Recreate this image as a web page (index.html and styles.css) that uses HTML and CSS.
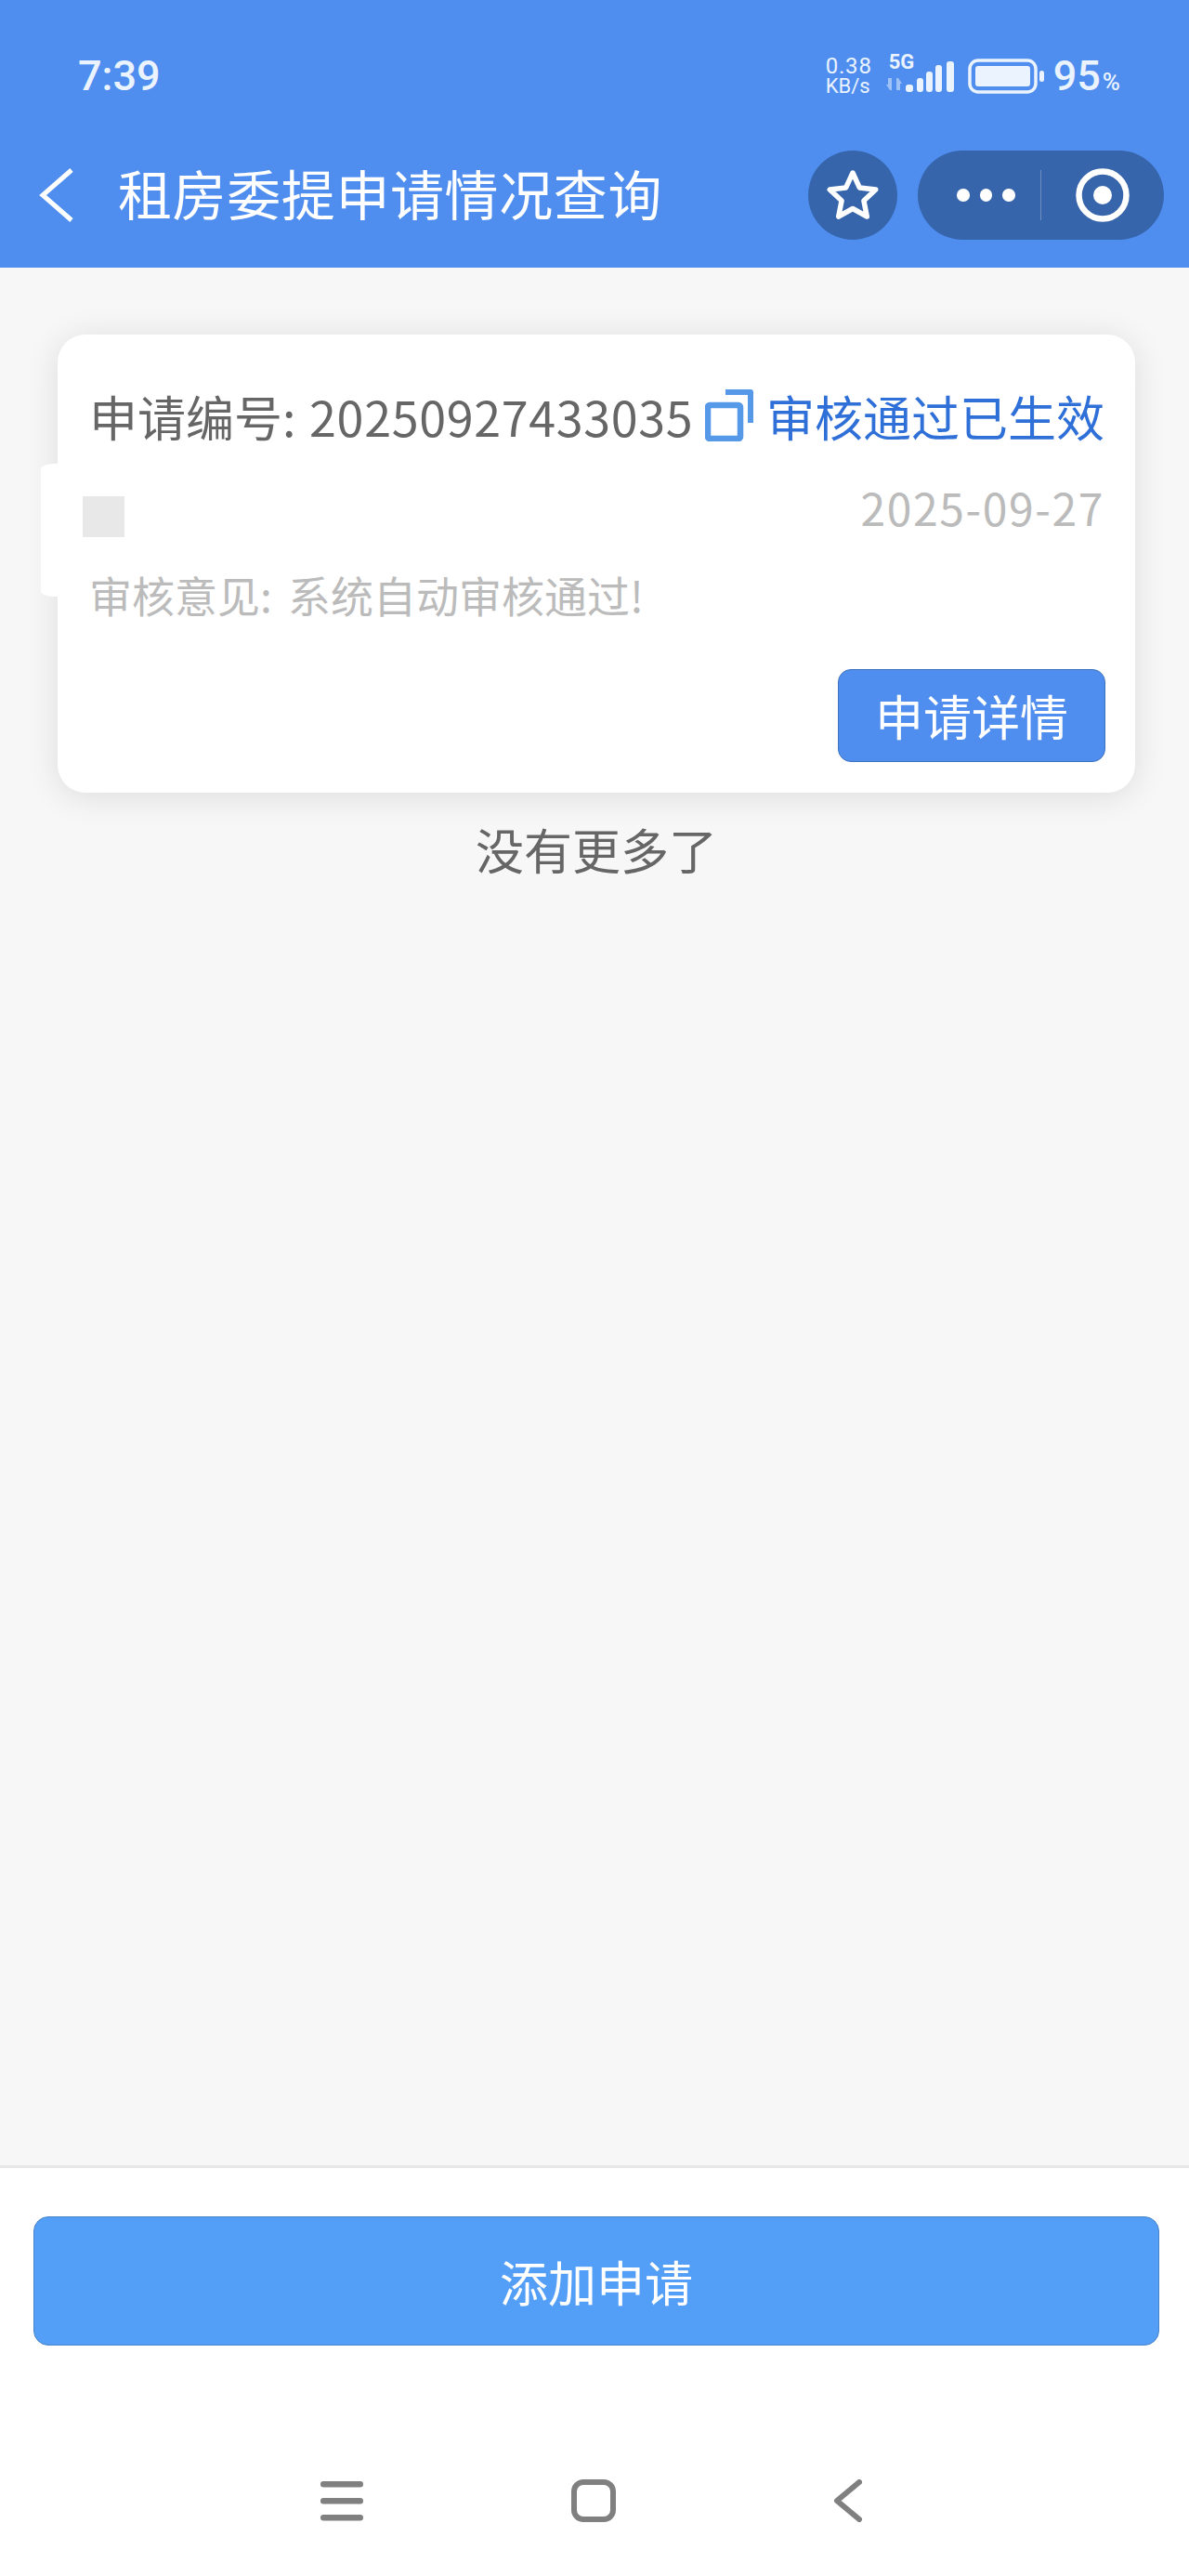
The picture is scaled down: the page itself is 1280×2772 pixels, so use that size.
FILE: index.html
```html
<!DOCTYPE html>
<html lang="zh-CN">
<head>
<meta charset="utf-8">
<title>租房委提申请情况查询</title>
<link rel="stylesheet" href="styles.css">
</head>
<body>
<div class="app">
  <header class="top">
    <div class="status">
      <span class="time">7:39</span>
      <div class="status-right">
        <div class="speed"><span class="speed-val">0.38</span><span class="speed-unit">KB/s</span></div>
        <div class="net">
          <span class="net-5g">5G</span>
          <svg width="76" height="40" viewBox="0 0 76 40">
            <g fill="#ffffff" fill-opacity=".45"><path d="M4 22h4v13H6l-4-6h2z"/><path d="M10 35h4V22h2l4 6h-2v7h-4z" transform="translate(-1 0)"/></g>
            <g fill="#eaf3fe"><rect x="23" y="29" width="8" height="8" rx="3"/><rect x="35" y="22" width="7" height="15" rx="3"/><rect x="45" y="15" width="7" height="22" rx="3"/><rect x="55" y="8" width="7" height="29" rx="3"/><rect x="67" y="4" width="8" height="33" rx="3"/></g>
          </svg>
        </div>
        <svg class="battery" width="84" height="38" viewBox="0 0 84 38">
          <rect x="2" y="2" width="71" height="34" rx="9" fill="none" stroke="#eaf3fe" stroke-width="3.5"/>
          <rect x="8" y="8" width="59" height="22" rx="3" fill="#eaf3fe"/>
          <rect x="77" y="13" width="5" height="12" rx="2.5" fill="#eaf3fe"/>
        </svg>
        <span class="pct">95<small class="pct-sign">%</small></span>
      </div>
    </div>
    <nav class="navbar">
      <svg class="back" width="40" height="60" viewBox="0 0 40 60"><path d="M36 3 5 30l31 27" fill="none" stroke="#fff" stroke-width="5"/></svg>
      <h1 class="title">租房委提申请情况查询</h1>
      <div class="star-btn">
        <svg width="58" height="60" viewBox="0 0 58 60"><path d="M29 6 36.3 21.9 53.7 24 40.9 35.9 44.3 53 29 44.5 13.7 53 17.1 35.9 4.3 24 21.7 21.9Z" fill="none" stroke="#fff" stroke-width="5.5" stroke-linejoin="round"/></svg>
      </div>
      <div class="capsule">
        <div class="dots"><i class="dot"></i><i class="dot"></i><i class="dot"></i></div>
        <i class="cap-div"></i>
        <svg width="60" height="60" viewBox="0 0 60 60"><circle cx="30" cy="30" r="25.5" fill="none" stroke="#fff" stroke-width="6.5"/><circle cx="30" cy="30" r="10" fill="#fff"/></svg>
      </div>
    </nav>
  </header>

  <main class="main">
    <article class="card">
      <div class="tab"><i class="tab-square"></i></div>
      <div class="row-head">
        <span class="apply-no">申请编号: <span class="apply-digits">20250927433035</span></span>
        <svg class="copy" width="52" height="56" viewBox="0 0 52 56">
          <rect x="3" y="17" width="35" height="36" rx="2" fill="none" stroke="#5599e8" stroke-width="6.5"/>
          <path d="M22 3H49V36" fill="none" stroke="#5599e8" stroke-width="6" stroke-linejoin="round"/>
        </svg>
        <span class="state">审核通过已生效</span>
      </div>
      <div class="date">2025-09-27</div>
      <div class="opinion">审核意见: 系统自动审核通过!</div>
      <div class="actions"><button class="detail-btn">申请详情</button></div>
    </article>
    <p class="no-more">没有更多了</p>
  </main>

  <footer class="footer">
    <button class="add-btn">添加申请</button>
    <div class="sysnav">
      <svg class="sys-menu" width="46" height="46" viewBox="0 0 46 46"><g fill="#808080"><rect y="2" width="46" height="6.5" rx="3.2"/><rect y="20" width="46" height="6.5" rx="3.2"/><rect y="38" width="46" height="6.5" rx="3.2"/></g></svg>
      <svg class="sys-home" width="48" height="46" viewBox="0 0 48 46"><rect x="3" y="3" width="42" height="40" rx="10" fill="none" stroke="#808080" stroke-width="6"/></svg>
      <svg class="sys-back" width="30" height="46" viewBox="0 0 30 46"><path d="M27 3 3 23l24 20" fill="none" stroke="#808080" stroke-width="6" stroke-linecap="round" stroke-linejoin="round"/></svg>
    </div>
  </footer>
</div>
</body>
</html>
```
FILE: styles.css
```css
* { box-sizing: border-box; }
html, body { margin: 0; padding: 0; }
body {
  width: 1280px;
  height: 2772px;
  font-family: "Noto Sans CJK SC", "Noto Sans", sans-serif;
  background: #f7f7f7;
  overflow: hidden;
}
.app { display: flex; flex-direction: column; height: 2772px; }

.top { background: #4f8eef; height: 288px; flex: none; }
.status {
  height: 162px;
  display: flex;
  align-items: center;
  padding: 1px 74px 0 84px;
  color: #eaf3fe;
  font-family: Roboto, sans-serif;
}
.time { font-size: 45px; font-weight: 500; line-height: 1; }
.status-right { margin-left: auto; display: flex; align-items: center; }
.speed {
  display: flex;
  flex-direction: column;
  width: 54px;
  white-space: nowrap;
}
.speed-val { font-size: 24px; line-height: 22px; letter-spacing: .8px; }
.speed-unit { font-size: 22px; line-height: 22px; }
.net { position: relative; width: 76px; height: 40px; margin-left: 9px; }
.net-5g {
  position: absolute;
  left: 5px;
  top: -7px;
  font-size: 22px;
  font-weight: 700;
  line-height: 24px;
}
.battery { margin-left: 14px; }
.pct { margin-left: 8px; font-size: 45px; line-height: 1; font-weight: 500; }
.pct-sign { font-size: 26px; margin-left: 2px; }

.navbar { height: 96px; display: flex; align-items: center; padding: 0 27px 0 41px; }
.back { flex: none; }
.title {
  margin: -6px 0 0 46px;
  font-size: 58px;
  font-weight: 400;
  letter-spacing: .6px;
  line-height: 96px;
  color: #fff;
  white-space: nowrap;
}
.star-btn {
  margin-left: auto;
  width: 96px;
  height: 96px;
  border-radius: 50%;
  background: #3665ac;
  display: flex;
  align-items: center;
  justify-content: center;
}
.capsule {
  margin-left: 22px;
  width: 265px;
  height: 96px;
  border-radius: 48px;
  background: #3665ac;
  display: flex;
  align-items: center;
  padding-left: 42px;
}
.dots { display: flex; gap: 11px; }
.dot { width: 13.5px; height: 13.5px; border-radius: 50%; background: #fff; }
.cap-div { width: 1px; height: 54px; background: rgba(255,255,255,.28); margin-left: 27px; }
.capsule svg { margin-left: 36px; }

.main { flex: 1; padding: 72px 58px 0 62px; }
.card {
  position: relative;
  height: 493px;
  background: #fff;
  border-radius: 30px;
  box-shadow: 0 4px 36px rgba(0,0,0,.11);
  padding: 58px 33px 33px 34px;
}
.tab {
  position: absolute;
  left: -18px;
  top: 139px;
  width: 40px;
  height: 143px;
  background: #fff;
  border-radius: 14px 0 0 14px / 6px 0 0 6px;
}
.tab-square {
  position: absolute;
  left: 45px;
  top: 35px;
  width: 45px;
  height: 44px;
  background: #e8e8e8;
}
.row-head { display: flex; align-items: center; height: 60px; white-space: nowrap; }
.apply-no { font-size: 52px; color: #666; line-height: 60px; }
.apply-digits { letter-spacing: .65px; margin-left: 3px; }
.copy { flex: none; margin-left: 13px; margin-top: -2px; }
.state { margin-left: auto; font-size: 52px; color: #2e6fd8; line-height: 60px; }
.date {
  margin-top: 37px;
  height: 60px;
  font-size: 48px;
  line-height: 60px;
  letter-spacing: 1.6px;
  color: #bbb;
  text-align: right;
}
.opinion {
  margin-top: 34px;
  height: 60px;
  font-size: 46px;
  line-height: 60px;
  word-spacing: 7px;
  color: #bbb;
  white-space: nowrap;
}
.actions { margin-top: 51px; display: flex; justify-content: flex-end; margin-right: -1px; }
.detail-btn {
  width: 288px;
  height: 100px;
  padding: 0;
  background: #4f8eef;
  border: 1.5px solid #3f72bd;
  border-radius: 14px;
  font: inherit;
  font-size: 52px;
  line-height: 1;
  color: #fff;
}
.no-more {
  margin: 31px 0 0;
  height: 60px;
  font-size: 52px;
  line-height: 60px;
  color: #666;
  text-align: center;
}

.footer {
  flex: none;
  height: 442px;
  background: #fff;
  border-top: 3px solid #e8e8e8;
  padding: 52px 32px 0 36px;
}
.add-btn {
  display: block;
  width: 100%;
  height: 139px;
  padding: 0;
  background: #539ef6;
  border: 1.5px solid #4a84c8;
  border-radius: 16px;
  font: inherit;
  font-size: 52px;
  line-height: 1;
  color: #fff;
}
.sysnav {
  display: flex;
  align-items: center;
  margin-top: 144px;
  padding-left: 309px;
}
.sys-home { margin-left: 224px; }
.sys-back { margin-left: 235px; }
```
